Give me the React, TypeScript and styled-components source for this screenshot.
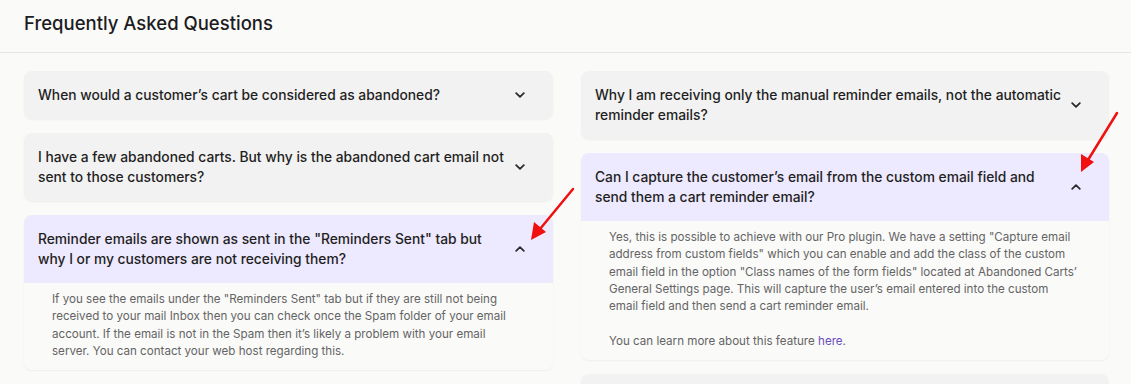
import { useState } from "react";
import styled, { createGlobalStyle } from "styled-components";

const GlobalStyle = createGlobalStyle`
  html, body {
    margin: 0;
    background: #fafaf9;
  }
  body {
    font-family: Inter, "Noto Sans", "Liberation Sans", sans-serif;
    -webkit-font-smoothing: antialiased;
  }
  p {
    margin: 0;
  }
`;

const Page = styled.div`
  position: relative;
  min-height: 384px;
  background: #fafaf9;
`;

const Header = styled.header`
  padding: 12px 24px 18px;
  border-bottom: 1px solid #e7e6e4;
`;

const Title = styled.h1`
  margin: 0;
  font-size: 18.5px;
  line-height: 22px;
  font-weight: 500;
  color: #1c1c1e;
`;

const Grid = styled.div`
  display: grid;
  grid-template-columns: 529px 528px;
  column-gap: 28px;
  align-items: start;
  padding: 18px 0 0 24px;
`;

const Stack = styled.div`
  display: flex;
  flex-direction: column;
  gap: 14px;
`;

const Card = styled.div`
  border-radius: 8px;
  box-shadow: 0 1px 2px rgba(0, 0, 0, 0.05);
  background: #fafaf9;
`;

const Question = styled.div<{ $open: boolean }>`
  display: flex;
  align-items: center;
  gap: 4px;
  padding: 14px 28px 14px 14px;
  background: ${(p) => (p.$open ? "#ede9fe" : "#f2f2f2")};
  border-radius: ${(p) => (p.$open ? "8px 8px 0 0" : "8px")};
  cursor: pointer;
`;

const QuestionText = styled.div`
  flex: 1;
  font-size: 13.8px;
  line-height: 20px;
  font-weight: 500;
  color: #1f1f23;
`;

const ChevronSvg = styled.svg<{ $up: boolean }>`
  flex: none;
  width: 10px;
  height: 6px;
  fill: none;
  stroke: #2a2a2e;
  stroke-width: 1.8;
  stroke-linecap: round;
  stroke-linejoin: round;
  transform: ${(p) => (p.$up ? "rotate(180deg)" : "none")};
`;

const Answer = styled.div`
  display: flex;
  flex-direction: column;
  gap: 17.3px;
  padding: 8px 28px 10px 28px;
  font-size: 11.6px;
  line-height: 17.3px;
  color: #646464;
`;

const Link = styled.a`
  color: #6b4fbb;
  text-decoration: none;
`;

const Annotations = styled.svg`
  position: absolute;
  top: 0;
  left: 0;
  width: 1131px;
  height: 384px;
  pointer-events: none;

  line {
    stroke: #f01010;
    stroke-width: 2.5;
    stroke-linecap: round;
  }
  polygon {
    fill: #f01010;
  }
`;

interface FaqItem {
  q: string;
  a: React.ReactNode;
}

const leftItems: FaqItem[] = [
  {
    q: "When would a customer’s cart be considered as abandoned?",
    a: "A cart is considered abandoned once the customer leaves it without placing an order for the cut-off time set in the settings.",
  },
  {
    q: "I have a few abandoned carts. But why is the abandoned cart email not sent to those customers?",
    a: "Emails are only sent to carts where the customer’s email address was captured.",
  },
  {
    q: 'Reminder emails are shown as sent in the "Reminders Sent" tab but why I or my customers are not receiving them?',
    a: (
      <p>
        If you see the emails under the "Reminders Sent" tab but if they are still not being
        received to your mail Inbox then you can check once the Spam folder of your email
        account. If the email is not in the Spam then it’s likely a problem with your email
        server. You can contact your web host regarding this.
      </p>
    ),
  },
];

const rightItems: FaqItem[] = [
  {
    q: "Why I am receiving only the manual reminder emails, not the automatic reminder emails?",
    a: "Automatic reminders rely on WP-Cron, please make sure it is running on your site.",
  },
  {
    q: "Can I capture the customer’s email from the custom email field and send them a cart reminder email?",
    a: (
      <>
        <p>
          Yes, this is possible to achieve with our Pro plugin. We have a setting "Capture email
          address from custom fields" which you can enable and add the class of the custom email
          field in the option "Class names of the form fields" located at Abandoned Carts’
          General Settings page. This will capture the user’s email entered into the custom
          <br />
          email field and then send a cart reminder email.
        </p>
        <p>
          You can learn more about this feature <Link href="#">here</Link>.
        </p>
      </>
    ),
  },
  {
    q: "Does the plugin work with guest users?",
    a: "Yes, guest carts are captured once the email address is entered on the checkout page.",
  },
];

const Chevron = ({ up }: { up: boolean }) => (
  <ChevronSvg viewBox="0 0 10 6" $up={up}>
    <path d="M1.2 1.2 5 4.8 8.8 1.2" />
  </ChevronSvg>
);

const FaqCard = ({ item, open, onToggle }: { item: FaqItem; open: boolean; onToggle: () => void }) => (
  <Card>
    <Question $open={open} onClick={onToggle}>
      <QuestionText>{item.q}</QuestionText>
      <Chevron up={open} />
    </Question>
    {open && <Answer>{item.a}</Answer>}
  </Card>
);

const Column = ({ items, initialOpen }: { items: FaqItem[]; initialOpen: number }) => {
  const [openIndex, setOpenIndex] = useState<number | null>(initialOpen);
  return (
    <Stack>
      {items.map((item, i) => (
        <FaqCard
          key={i}
          item={item}
          open={openIndex === i}
          onToggle={() => setOpenIndex(openIndex === i ? null : i)}
        />
      ))}
    </Stack>
  );
};

export default function App() {
  return (
    <Page>
      <GlobalStyle />
      <Header>
        <Title>Frequently Asked Questions</Title>
      </Header>
      <Grid>
        <Column items={leftItems} initialOpen={2} />
        <Column items={rightItems} initialOpen={1} />
      </Grid>
      {/* red annotation arrows from the screenshot */}
      <Annotations viewBox="0 0 1131 384">
        <line x1="573" y1="189" x2="540" y2="229" />
        <polygon points="531,240 534,222 546,232" />
        <line x1="1117" y1="113" x2="1088" y2="160" />
        <polygon points="1081,172 1081,154 1094,162" />
      </Annotations>
    </Page>
  );
}
